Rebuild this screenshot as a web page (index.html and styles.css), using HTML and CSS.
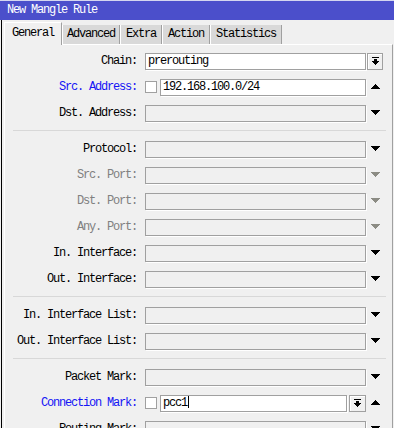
FILE: index.html
```html
<!DOCTYPE html>
<html lang="en">
<head>
    <meta charset="UTF-8">
    <title>New Mangle Rule</title>
    <link rel="stylesheet" href="styles.css">
</head>
<body>
    <div class="titlebar">New Mangle Rule</div>
    <div class="main">
        <div class="tabs">
            <div class="tab active">General</div>
            <div class="tab narrow">Advanced</div>
            <div class="tab">Extra</div>
            <div class="tab">Action</div>
            <div class="tab">Statistics</div>
        </div>
        <div class="panel">
            <div class="row">
                <span class="lbl">Chain:</span>
                <div class="field"><div class="input on">prerouting</div></div>
                <div class="side"><span class="btn first"><svg width="7" height="8" viewBox="0 0 7 8"><path d="M0 0h7v1H0z M2 2h3v2H2z M0 4h7v1H0z M1 5h5v1H1z M2 6h3v1H2z M3 7h1v1H3z"/></svg></span></div>
            </div>
            <div class="row">
                <span class="lbl blue">Src. Address:</span>
                <div class="field"><span class="check"></span><div class="input on">192.168.100.0/24</div></div>
                <div class="side"><svg class="arrow" width="9" height="5" viewBox="0 0 9 5"><path d="M4 0h1v1H4z M3 1h3v1H3z M2 2h5v1H2z M1 3h7v1H1z M0 4h9v1H0z"/></svg></div>
            </div>
            <div class="row">
                <span class="lbl">Dst. Address:</span>
                <div class="field"><div class="input"></div></div>
                <div class="side"><svg class="arrow" width="9" height="5" viewBox="0 0 9 5"><path d="M0 0h9v1H0z M1 1h7v1H1z M2 2h5v1H2z M3 3h3v1H3z M4 4h1v1H4z"/></svg></div>
            </div>

            <div class="sep"></div>

            <div class="row">
                <span class="lbl">Protocol:</span>
                <div class="field"><div class="input"></div></div>
                <div class="side"><svg class="arrow" width="9" height="5" viewBox="0 0 9 5"><path d="M0 0h9v1H0z M1 1h7v1H1z M2 2h5v1H2z M3 3h3v1H3z M4 4h1v1H4z"/></svg></div>
            </div>
            <div class="row">
                <span class="lbl grey">Src. Port:</span>
                <div class="field"><div class="input"></div></div>
                <div class="side"><svg class="arrow off" width="9" height="5" viewBox="0 0 9 5"><path d="M0 0h9v1H0z M1 1h7v1H1z M2 2h5v1H2z M3 3h3v1H3z M4 4h1v1H4z"/></svg></div>
            </div>
            <div class="row">
                <span class="lbl grey">Dst. Port:</span>
                <div class="field"><div class="input"></div></div>
                <div class="side"><svg class="arrow off" width="9" height="5" viewBox="0 0 9 5"><path d="M0 0h9v1H0z M1 1h7v1H1z M2 2h5v1H2z M3 3h3v1H3z M4 4h1v1H4z"/></svg></div>
            </div>
            <div class="row">
                <span class="lbl grey">Any. Port:</span>
                <div class="field"><div class="input"></div></div>
                <div class="side"><svg class="arrow off" width="9" height="5" viewBox="0 0 9 5"><path d="M0 0h9v1H0z M1 1h7v1H1z M2 2h5v1H2z M3 3h3v1H3z M4 4h1v1H4z"/></svg></div>
            </div>
            <div class="row">
                <span class="lbl">In. Interface:</span>
                <div class="field"><div class="input"></div></div>
                <div class="side"><svg class="arrow" width="9" height="5" viewBox="0 0 9 5"><path d="M0 0h9v1H0z M1 1h7v1H1z M2 2h5v1H2z M3 3h3v1H3z M4 4h1v1H4z"/></svg></div>
            </div>
            <div class="row">
                <span class="lbl">Out. Interface:</span>
                <div class="field"><div class="input"></div></div>
                <div class="side"><svg class="arrow" width="9" height="5" viewBox="0 0 9 5"><path d="M0 0h9v1H0z M1 1h7v1H1z M2 2h5v1H2z M3 3h3v1H3z M4 4h1v1H4z"/></svg></div>
            </div>

            <div class="sep"></div>

            <div class="row">
                <span class="lbl">In. Interface List:</span>
                <div class="field"><div class="input"></div></div>
                <div class="side"><svg class="arrow" width="9" height="5" viewBox="0 0 9 5"><path d="M0 0h9v1H0z M1 1h7v1H1z M2 2h5v1H2z M3 3h3v1H3z M4 4h1v1H4z"/></svg></div>
            </div>
            <div class="row">
                <span class="lbl">Out. Interface List:</span>
                <div class="field"><div class="input"></div></div>
                <div class="side"><svg class="arrow" width="9" height="5" viewBox="0 0 9 5"><path d="M0 0h9v1H0z M1 1h7v1H1z M2 2h5v1H2z M3 3h3v1H3z M4 4h1v1H4z"/></svg></div>
            </div>

            <div class="sep"></div>

            <div class="row">
                <span class="lbl">Packet Mark:</span>
                <div class="field"><div class="input"></div></div>
                <div class="side"><svg class="arrow" width="9" height="5" viewBox="0 0 9 5"><path d="M0 0h9v1H0z M1 1h7v1H1z M2 2h5v1H2z M3 3h3v1H3z M4 4h1v1H4z"/></svg></div>
            </div>
            <div class="row">
                <span class="lbl blue">Connection Mark:</span>
                <div class="field">
                    <span class="check"></span>
                    <div class="input on">pcc1<span class="caret"></span></div>
                    <span class="btn"><svg width="7" height="8" viewBox="0 0 7 8"><path d="M0 0h7v1H0z M2 2h3v2H2z M0 4h7v1H0z M1 5h5v1H1z M2 6h3v1H2z M3 7h1v1H3z"/></svg></span>
                </div>
                <div class="side"><svg class="arrow" width="9" height="5" viewBox="0 0 9 5"><path d="M4 0h1v1H4z M3 1h3v1H3z M2 2h5v1H2z M1 3h7v1H1z M0 4h9v1H0z"/></svg></div>
            </div>
            <div class="row">
                <span class="lbl">Routing Mark:</span>
                <div class="field"><div class="input"></div></div>
                <div class="side"><svg class="arrow" width="9" height="5" viewBox="0 0 9 5"><path d="M0 0h9v1H0z M1 1h7v1H1z M2 2h5v1H2z M3 3h3v1H3z M4 4h1v1H4z"/></svg></div>
            </div>
        </div>
    </div>
</body>
</html>
```

FILE: styles.css
```css
* {
    box-sizing: border-box;
}
body {
    margin: 0;
    height: 428px;
    overflow: hidden;
    background-color: #f0f0f0;
    font-family: 'Liberation Mono', monospace;
    font-size: 12px;
    letter-spacing: -1.2px;
    color: #000;
}
.titlebar {
    height: 20px;
    border-top: 1px solid #d4d6f0;
    background-color: #4b4fcb;
    color: #fff;
    padding-left: 7px;
    line-height: 19px;
}
.main {
    margin-left: 1px;
    border-left: 1px solid #000;
    padding-left: 2px;
}
.tabs {
    display: flex;
    align-items: flex-end;
    height: 24px;
}
.tab {
    height: 19px;
    padding: 0 5px;
    line-height: 19px;
    background-color: #d9d9d9;
    border-left: 1px solid #fff;
    border-right: 1px solid #a0a0a0;
    white-space: nowrap;
}
.tab.narrow {
    padding: 0 4px;
}
.tab.active {
    position: relative;
    z-index: 1;
    height: 23px;
    margin-bottom: -1px;
    padding: 0 7px;
    line-height: 20px;
    background-color: #f0f0f0;
    border-top: 1px solid #fff;
}
.panel {
    width: 389px;
    height: 400px;
    padding-top: 3px;
    border-top: 1px solid #fff;
    border-left: 1px solid #fff;
    border-right: 1px solid #a0a0a0;
}
.row {
    display: flex;
    align-items: center;
    height: 26px;
}
.lbl {
    width: 132px;
    text-align: right;
    white-space: nowrap;
}
.lbl.blue {
    color: #1414f5;
}
.lbl.grey {
    color: #808080;
}
.field {
    display: flex;
    align-items: center;
    width: 221px;
    margin-left: 8px;
}
.input {
    flex: 1;
    height: 17px;
    padding-left: 2px;
    line-height: 15px;
    border: 1px solid #a0a0a0;
    box-shadow: 1px 1px 0 #fff;
    white-space: nowrap;
    overflow: hidden;
}
.input.on {
    background-color: #fff;
}
.check {
    flex: none;
    width: 12px;
    height: 12px;
    margin-right: 3px;
    background-color: #fff;
    border: 1px solid #a0a0a0;
}
.caret {
    display: inline-block;
    width: 1px;
    height: 12px;
    margin-left: 1px;
    background-color: #000;
    vertical-align: -2px;
}
.btn {
    flex: none;
    display: flex;
    align-items: center;
    justify-content: center;
    width: 17px;
    height: 17px;
    margin-left: 2px;
    background-color: #f0f0f0;
    border: 1px solid #a0a0a0;
    box-shadow: inset 1px 1px 0 #fff;
}
.btn.first {
    width: 16px;
    margin-left: 1px;
}
.side {
    display: flex;
    align-items: center;
    width: 25px;
    height: 100%;
}
.arrow {
    margin-left: 5px;
    margin-bottom: 2px;
    fill: #000;
}
.arrow.off {
    fill: #8c8c84;
}
.sep {
    margin: 4px 6px 5px 8px;
    border-top: 1px solid #d8d8d8;
}
```
